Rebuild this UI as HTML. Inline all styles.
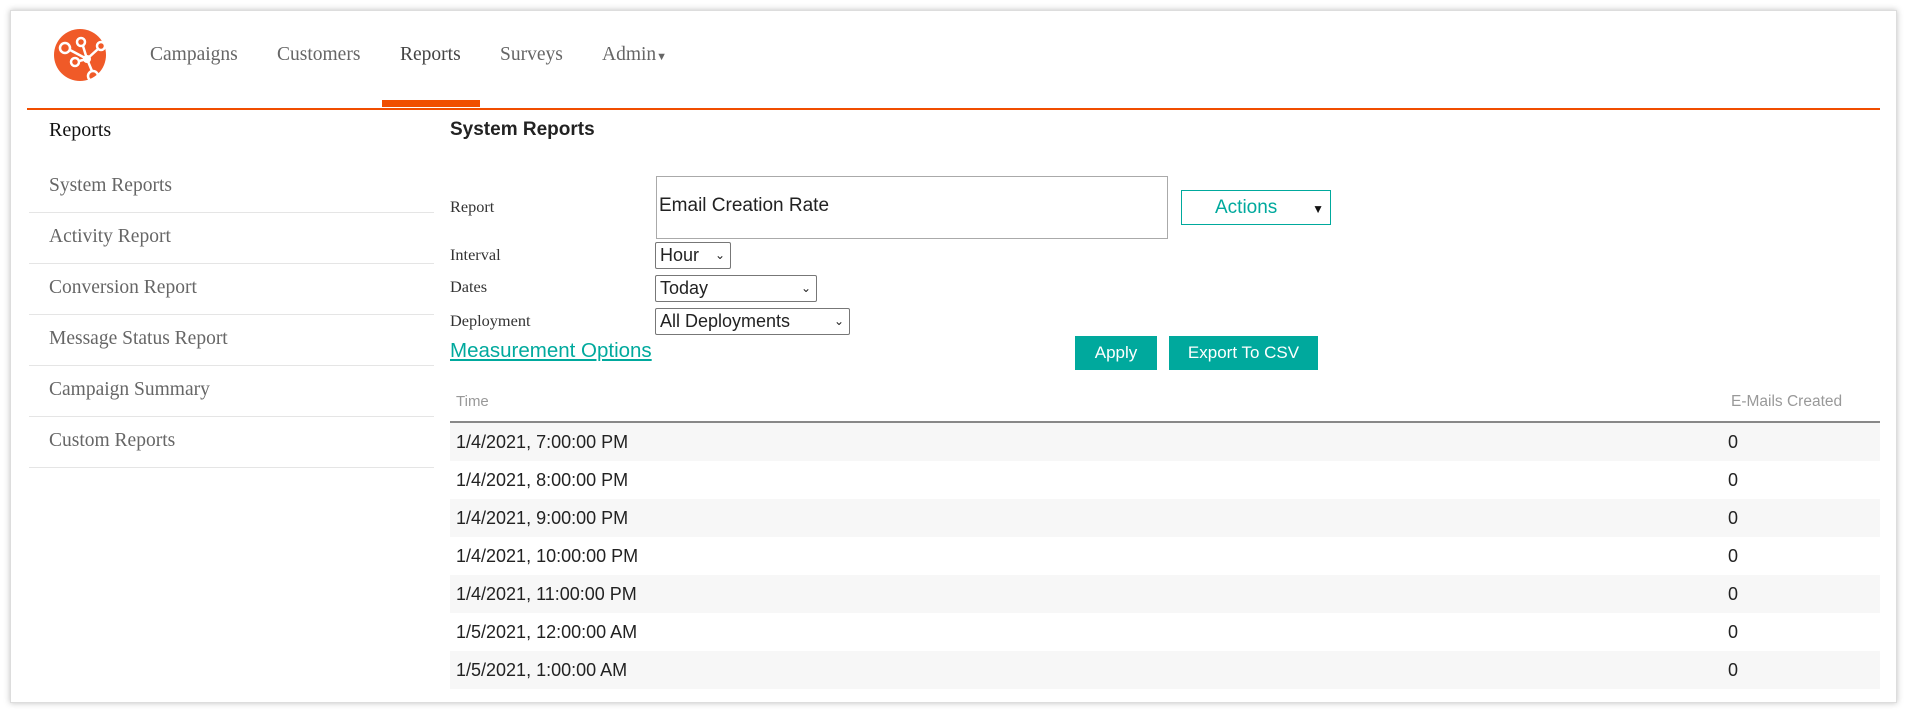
<!DOCTYPE html>
<html><head><meta charset="utf-8"><style>
*{margin:0;padding:0;box-sizing:border-box}
body{width:1907px;height:711px;background:#fff;position:relative;overflow:hidden;font-family:"Liberation Serif",serif}
.frame{position:absolute;left:10px;top:10px;width:1887px;height:693px;border:1px solid #ddd;box-shadow:0 0 6px rgba(0,0,0,.25)}
.a{position:absolute;white-space:nowrap}
.nav{font-size:19.5px;color:#666;top:44px}
.side{font-size:19.5px;color:#666;left:49px}
.sep{position:absolute;left:29px;width:405px;height:1px;background:#e5e5e5}
.lbl{font-size:16.3px;color:#333;left:450px}
.sel{position:absolute;left:655px;border:1px solid #777;border-radius:2px;font-family:"Liberation Sans",sans-serif;font-size:18px;color:#222;padding-left:4px;line-height:24px;background:#fff}
.sel span{position:absolute;right:5px;top:0;font-size:12px}
.btn{position:absolute;top:336px;height:34px;background:#00a99d;color:#fff;font-family:"Liberation Sans",sans-serif;font-size:17px;text-align:center;line-height:34px}
.row{position:absolute;left:450px;width:1430px;height:38px;font-family:"Liberation Sans",sans-serif;font-size:18px;color:#222;line-height:38px}
.row.s{background:#f7f7f7}
.row b{font-weight:normal;position:absolute;left:6px}
.row i{font-style:normal;position:absolute;left:1278px}
</style></head><body>
<div class="frame"></div>
<svg class="a" style="left:53px;top:28px" width="54" height="54" viewBox="0 0 54 54">
<circle cx="27" cy="27" r="26" fill="#f05a28"/>
<g stroke="#fff" stroke-width="2.5" fill="none">
<circle cx="12" cy="20" r="5"/><circle cx="28" cy="14" r="4"/><circle cx="22" cy="34" r="4"/><circle cx="48" cy="18" r="4"/><circle cx="40" cy="48" r="5"/>
<path d="M17 22 L34 31 M30 18 L34 31 M26 33 L34 31 M45 21 L34 31 L39 43"/>
</g><circle cx="34" cy="31" r="4" fill="#fff"/></svg>
<div class="a nav" style="left:150px">Campaigns</div>
<div class="a nav" style="left:277px">Customers</div>
<div class="a nav" style="left:400px;color:#444">Reports</div>
<div class="a nav" style="left:500px">Surveys</div>
<div class="a nav" style="left:602px">Admin<span style="font-size:11px">▼</span></div>
<div class="a" style="left:382px;top:100px;width:98px;height:7px;background:#f04e00"></div>
<div class="a" style="left:27px;top:108px;width:1853px;height:2px;background:#f04e00"></div>

<div class="a" style="left:49px;top:119px;font-size:20px;color:#111">Reports</div>
<div class="a side" style="top:175px">System Reports</div><div class="sep" style="top:212px"></div>
<div class="a side" style="top:226px">Activity Report</div><div class="sep" style="top:263px"></div>
<div class="a side" style="top:277px">Conversion Report</div><div class="sep" style="top:314px"></div>
<div class="a side" style="top:328px">Message Status Report</div><div class="sep" style="top:365px"></div>
<div class="a side" style="top:379px">Campaign Summary</div><div class="sep" style="top:416px"></div>
<div class="a side" style="top:430px">Custom Reports</div><div class="sep" style="top:467px"></div>

<div class="a" style="left:450px;top:119px;font-family:'Liberation Sans',sans-serif;font-weight:bold;font-size:19px;color:#222">System Reports</div>
<div class="a lbl" style="top:197px">Report</div>
<div class="a lbl" style="top:245px">Interval</div>
<div class="a lbl" style="top:277px">Dates</div>
<div class="a lbl" style="top:311px">Deployment</div>
<div class="a" style="left:656px;top:176px;width:512px;height:63px;border:1px solid #aaa;font-family:'Liberation Sans',sans-serif;font-size:19px;color:#222;padding:18px 0 0 2px">Email Creation Rate</div>
<div class="a" style="left:1181px;top:190px;width:150px;height:35px;border:1px solid #00a99d;font-family:'Liberation Sans',sans-serif;font-size:19px;color:#00a99d;line-height:33px;padding-left:33px">Actions<span style="position:absolute;right:6px;top:2px;font-size:12px;color:#111">▼</span></div>
<div class="sel" style="top:242px;width:76px;height:27px">Hour<span>⌄</span></div>
<div class="sel" style="top:275px;width:162px;height:27px">Today<span>⌄</span></div>
<div class="sel" style="top:308px;width:195px;height:27px">All Deployments<span>⌄</span></div>
<div class="a" style="left:450px;top:339px;font-family:'Liberation Sans',sans-serif;font-size:20.5px;color:#00a99d;text-decoration:underline">Measurement Options</div>
<div class="btn" style="left:1075px;width:82px">Apply</div>
<div class="btn" style="left:1169px;width:149px">Export To CSV</div>

<div class="a" style="left:456px;top:393px;font-family:'Liberation Sans',sans-serif;font-size:15px;color:#999">Time</div>
<div class="a" style="left:1731px;top:393px;font-family:'Liberation Sans',sans-serif;font-size:15.5px;color:#999">E-Mails Created</div>
<div class="a" style="left:450px;top:421px;width:1430px;height:2px;background:#888"></div>
<div class="row s" style="top:423px"><b>1/4/2021, 7:00:00 PM</b><i>0</i></div>
<div class="row" style="top:461px"><b>1/4/2021, 8:00:00 PM</b><i>0</i></div>
<div class="row s" style="top:499px"><b>1/4/2021, 9:00:00 PM</b><i>0</i></div>
<div class="row" style="top:537px"><b>1/4/2021, 10:00:00 PM</b><i>0</i></div>
<div class="row s" style="top:575px"><b>1/4/2021, 11:00:00 PM</b><i>0</i></div>
<div class="row" style="top:613px"><b>1/5/2021, 12:00:00 AM</b><i>0</i></div>
<div class="row s" style="top:651px"><b>1/5/2021, 1:00:00 AM</b><i>0</i></div>
</body></html>
